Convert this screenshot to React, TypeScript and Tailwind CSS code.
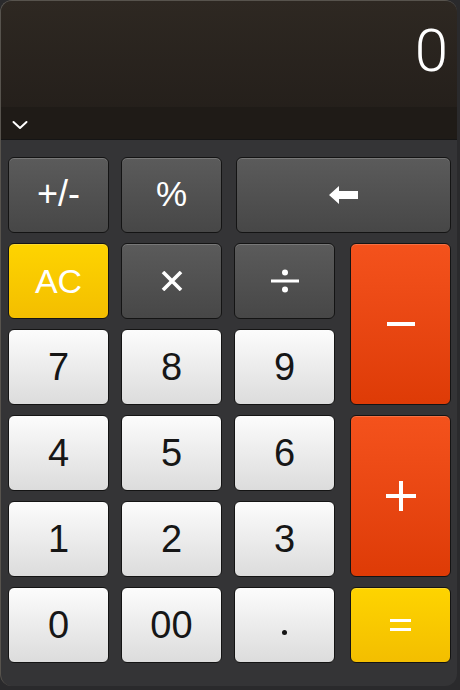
import React from "react";

type Tone = "dark" | "light" | "orange" | "yellow";

const tones: Record<Tone, string> = {
  dark: "bg-linear-to-b from-[#5b5b5b] to-[#474747] text-white",
  light: "bg-linear-to-b from-[#fcfcfc] to-[#dcdcdc] text-[#161616]",
  orange: "bg-linear-to-b from-[#f4521c] to-[#de3b06] text-white",
  yellow: "bg-linear-to-b from-[#fed400] to-[#f3be00] text-white",
};

function Key({
  tone,
  className = "",
  children,
}: {
  tone: Tone;
  className?: string;
  children: React.ReactNode;
}) {
  return (
    <button
      className={`flex items-center justify-center rounded-[6px] border border-[#141414]
        shadow-[inset_0_1px_0_rgba(255,255,255,0.18)] ${tones[tone]} ${className}`}
    >
      {children}
    </button>
  );
}

export default function App() {
  const digit = "text-[38px] leading-none";
  return (
    <div
      className="w-[460px] h-[690px] bg-[#2a2a2c] overflow-hidden"
      style={{ fontFamily: '"Liberation Sans", Arial, sans-serif' }}
    >
      <div className="h-[686px] w-[457px] rounded-[12px] border-t border-l border-[#57534d] overflow-hidden flex flex-col bg-[#343436]">
        {/* display */}
        <div className="h-[138px] shrink-0 flex flex-col bg-linear-to-b from-[#2e2822] to-[#221d19]">
          <div className="flex-1 flex justify-end items-start pt-[20px] pr-[9px]">
            <span
              className="text-white text-[60px] leading-none font-light"
              style={{ fontFamily: "Roboto, sans-serif" }}
            >
              0
            </span>
          </div>
          <div className="h-[32px] bg-[#1f1b17] flex items-center pl-[11px] pt-[3px]">
            <svg width="16" height="10" viewBox="0 0 16 10" fill="none">
              <path
                d="M1.5 2l6.5 6 6.5-6"
                stroke="white"
                strokeWidth="2"
                strokeLinecap="round"
                strokeLinejoin="round"
              />
            </svg>
          </div>
        </div>

        {/* keypad */}
        <div className="flex-1 border-t border-[#151515] pt-[17px] pl-[7px]">
          <div className="grid grid-cols-[101px_101px_104px_101px] grid-rows-[76px_76px_76px_76px_76px_76px] gap-x-[12px] gap-y-[10px]">
            <Key tone="dark" className="text-[36px] pb-[2px]">
              +/-
            </Key>
            <Key tone="dark" className="text-[35px] pb-[2px]">
              %
            </Key>
            <Key tone="dark" className="col-span-2 ml-[2px]">
              <svg width="30" height="18" viewBox="0 0 30 18">
                <path d="M0 9L10 0V5H29V13H10V18Z" fill="white" />
              </svg>
            </Key>

            <Key tone="yellow" className="text-[34px]">
              AC
            </Key>
            <Key tone="dark">
              <svg width="22" height="20" viewBox="0 0 22 20">
                <path d="M2 1L20 19M20 1L2 19" stroke="white" strokeWidth="3.6" />
              </svg>
            </Key>
            <Key tone="dark" className="w-[101px]">
              <svg width="28" height="24" viewBox="0 0 28 24">
                <circle cx="14" cy="3.5" r="3" fill="white" />
                <rect x="0" y="10.5" width="28" height="3" fill="white" />
                <circle cx="14" cy="20.5" r="3" fill="white" />
              </svg>
            </Key>
            <Key tone="orange" className="row-span-2">
              <span className="block w-[28px] h-[4px] bg-white" />
            </Key>

            <Key tone="light" className={digit}>7</Key>
            <Key tone="light" className={digit}>8</Key>
            <Key tone="light" className={`${digit} w-[101px]`}>9</Key>

            <Key tone="light" className={digit}>4</Key>
            <Key tone="light" className={digit}>5</Key>
            <Key tone="light" className={`${digit} w-[101px]`}>6</Key>
            <Key tone="orange" className="row-span-2">
              <svg width="30" height="30" viewBox="0 0 30 30">
                <rect x="13" y="0" width="4" height="30" fill="white" />
                <rect x="0" y="13" width="30" height="4" fill="white" />
              </svg>
            </Key>

            <Key tone="light" className={digit}>1</Key>
            <Key tone="light" className={digit}>2</Key>
            <Key tone="light" className={`${digit} w-[101px]`}>3</Key>

            <Key tone="light" className={digit}>0</Key>
            <Key tone="light" className={digit}>00</Key>
            <Key tone="light" className={`${digit} w-[101px] pt-[14px]`}>
              <span className="block w-[5px] h-[5px] rounded-full bg-[#161616]" />
            </Key>
            <Key tone="yellow">
              <svg width="21" height="12" viewBox="0 0 21 12">
                <rect x="0" y="0" width="21" height="3" fill="white" />
                <rect x="0" y="9" width="21" height="3" fill="white" />
              </svg>
            </Key>
          </div>
        </div>
      </div>
    </div>
  );
}
